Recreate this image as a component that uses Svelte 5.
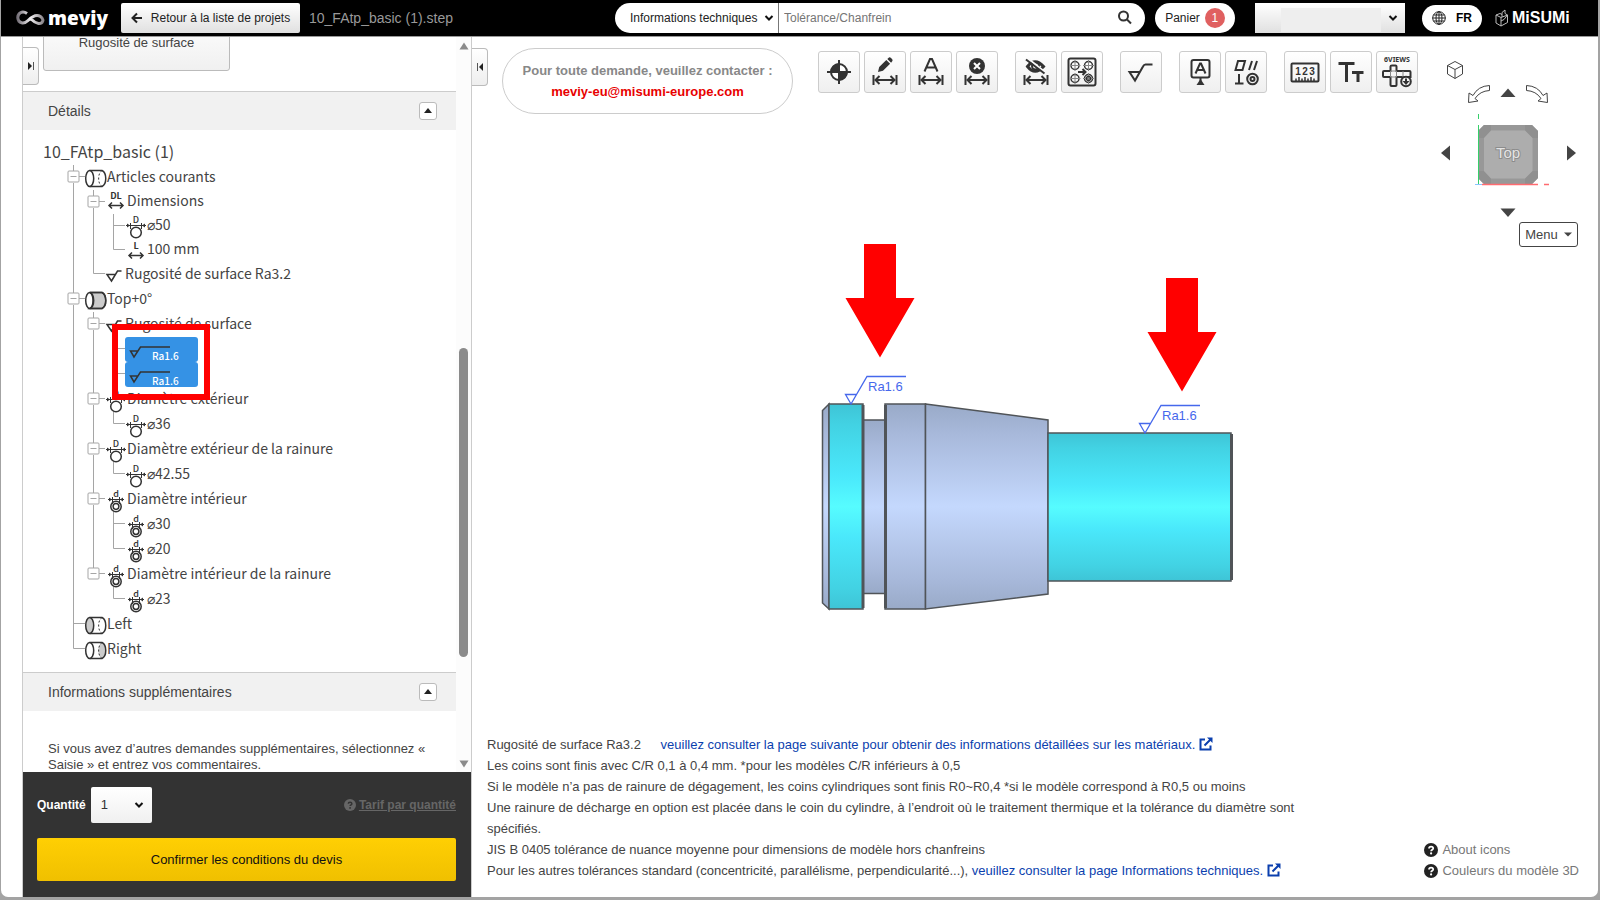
<script>
  const B = 'box', V = 'line', T = 'tee', E = 'end', L = 'last', N = 'none';
  const rows = [
    { g: [B], icon: 'cyl', label: 'Articles courants' },
    { g: [V, B], icon: 'dl', label: 'Dimensions', tight: true },
    { g: [V, V, T], icon: 'outer', label: '⌀50', tight: true },
    { g: [V, V, E], icon: 'len', label: '100 mm', tight: true },
    { g: [V, E], icon: 'rough', label: 'Rugosité de surface Ra3.2' },
    { g: [B], icon: 'cylFull', label: 'Top+0°' },
    { g: [V, B], icon: 'rough', label: 'Rugosité de surface' },
    { g: [V, V, T], icon: 'ra', label: 'Ra1.6' },
    { g: [V, V, E], icon: 'ra', label: 'Ra1.6' },
    { g: [V, B], icon: 'outer', label: 'Diamètre extérieur' },
    { g: [V, V, E], icon: 'outer', label: '⌀36' },
    { g: [V, B], icon: 'outer', label: 'Diamètre extérieur de la rainure' },
    { g: [V, V, E], icon: 'outer', label: '⌀42.55' },
    { g: [V, B], icon: 'inner', label: 'Diamètre intérieur' },
    { g: [V, V, T], icon: 'inner', label: '⌀30' },
    { g: [V, V, E], icon: 'inner', label: '⌀20' },
    { g: [V, L], icon: 'inner', label: 'Diamètre intérieur de la rainure' },
    { g: [V, N, E], icon: 'inner', label: '⌀23' },
    { g: [T], icon: 'cylLeft', label: 'Left' },
    { g: [E], icon: 'cylRight', label: 'Right' }
  ];
  const tools = [
    [['target', 'Origine'], ['edit', 'Modifier la cote'], ['auto', 'Cote automatique'], ['remove', 'Supprimer la cote']],
    [['hide', 'Masquer les cotes'], ['holes', 'Regrouper les trous']],
    [['rough', 'Rugosité']],
    [['datum', 'Référence'], ['geo', 'Tolérances géométriques']],
    [['ruler', 'Mesure'], ['text', 'Texte'], ['views', '6 vues']]
  ];
</script>

{#snippet chevron()}
  <svg class="chev" viewBox="0 0 10 8" width="10" height="8" aria-hidden="true"><path d="M1.5 2 5 5.5 8.5 2" /></svg>
{/snippet}

{#snippet help()}
  <svg viewBox="0 0 14 14" width="14" height="14" aria-hidden="true"><circle cx="7" cy="7" r="7" fill="currentColor" /><path d="M5 5.6C5 3 9.2 3.2 9.2 5.4 9.2 6.8 7.1 6.8 7.1 8.3" fill="none" stroke="var(--hole)" stroke-width="1.7" /><circle cx="7.1" cy="10.4" r="1.1" fill="var(--hole)" /></svg>
{/snippet}

{#snippet ext()}
  <svg class="ext" viewBox="0 0 14 14" width="14" height="14" aria-hidden="true"><path d="M6 2.5H1.5v10h10V8.5M5.5 8.5 12 2" fill="none" stroke="#0b3fae" stroke-width="2" /><path d="M8 .5h5.5V6Z" fill="#0b3fae" /></svg>
{/snippet}

{#snippet guide(kind)}
  <svg class="guide" viewBox="0 0 20 25" width="20" height="25" aria-hidden="true">
    {#if kind === 'line'}
      <path d="M10.5 0V25" />
    {:else if kind === 'tee'}
      <path d="M10.5 0V25M10.5 11.5H22" />
    {:else if kind === 'end'}
      <path d="M10.5 0V11.5H22" />
    {:else if kind !== 'none'}
      <path d="M10.5 0V6M16 11.5H22" />
      {#if kind === 'box'}<path d="M10.5 18V25" />{/if}
      <rect x="5" y="6" width="11" height="11" rx="1" />
      <path d="M7.5 11.5H13.5" />
    {/if}
  </svg>
{/snippet}

{#snippet nodeIcon(kind)}
  <svg class="node" class:slim={kind === 'rough'} viewBox="0 0 24 25" width="24" height="25" aria-hidden="true">
    {#if kind.startsWith('cyl')}
      {#if kind === 'cylFull'}<path class="grey" d="M7 5.5H19C24 8 24 19 19 21.5H7C11 19 11 8 7 5.5" />{/if}
      {#if kind === 'cylRight'}<path class="grey flat" d="M19 5.5C24 8 24 19 19 21.5C14 19 14 8 19 5.5" />{/if}
      <ellipse cx="6.7" cy="13.5" rx="4" ry="8" class:grey={kind === 'cylLeft'} />
      <path d="M6.7 5.5H19C24 8 24 19 19 21.5H6.7" />
      {#if kind !== 'cylFull'}<path class="dash" d="M19 5.5C14.5 8 14.5 19 19 21.5" />{/if}
    {:else if kind === 'dl'}
      <text x="13" y="10" class="tag">DL</text>
      <path d="M6 16.5H20M9 13.5 6 16.5 9 19.5M17 13.5 20 16.5 17 19.5" />
    {:else if kind === 'len'}
      <text x="13" y="12" class="tag">L</text>
      <path d="M6 18.5H20M9 15.5 6 18.5 9 21.5M17 15.5 20 18.5 17 21.5" />
    {:else if kind === 'outer'}
      <text x="13" y="9.5" class="tag thin">D</text>
      <path d="M3 12.5H23M7.5 10V16M18.5 10V16" class="hair" />
      <path d="M4 10.5 7 12.5 4 14.5ZM22 10.5 19 12.5 22 14.5Z" class="ink" />
      <circle cx="13" cy="19.5" r="5.3" />
    {:else if kind === 'inner'}
      <text x="13" y="9.5" class="tag thin">d</text>
      <path d="M5 12.500H21M9.500 10V17M16.500 10V17" class="hair" />
      <path d="M6 10.500 9 12.500 6 14.500ZM20 10.500 17 12.500 20 14.500Z" class="ink" />
      <circle cx="13" cy="19.500" r="5.200" /><circle cx="13" cy="19.500" r="2.900" />
    {:else}
      <path d="M18.500 9H14.500L8.500 19 4 12.500H12" />
    {/if}
  </svg>
{/snippet}

{#snippet span()}
  <path d="M9.500 24V34M32.500 24V34M11 29H31" /><path d="M15.500 25 11.500 29 15.500 33M26.500 25 30.500 29 26.500 33" />
{/snippet}

{#snippet toolIcon(kind)}
  <svg class="tool" viewBox="0 0 42 42" width="42" height="42" aria-hidden="true">
    {#if kind === 'target'}
      <circle cx="21" cy="21" r="8" fill="#fff" />
      <path d="M21 21H12.500A8.500 8.500 0 0 1 21 12.500ZM21 21H29.500A8.500 8.500 0 0 1 21 29.500Z" class="fill" />
      <path d="M9 21H33M21 9V33" />
    {:else if kind === 'edit'}
      <path class="fill" d="M14 21 15.200 16 22.300 8.900 26.100 12.700 19 19.800ZM23.300 7.900 25 6.500Q26 6 27 7L28 8Q29 9 28.400 10.100L27.100 11.700Z" />
      {@render span()}
    {:else if kind === 'auto'}
      <path d="M14.500 20.500 20 8H22L27.500 20.500M16.500 16.500H25.500" />
      {@render span()}
    {:else if kind === 'remove'}
      <circle class="fill" cx="21" cy="15" r="8" /><path d="M18 12 24 18M24 12 18 18" class="white" />
      {@render span()}
    {:else if kind === 'hide'}
      <path d="M12.500 15.500Q20 6 28.500 15.500 20 25 12.500 15.500Z" class="fat" /><circle cx="20.500" cy="15" r="3.500" />
      <path d="M13 7.500 30.500 21.500" stroke="#fafafa" /><path d="M11 8.500 29.500 22.500" />
      {@render span()}
    {:else if kind === 'holes'}
      <rect x="7.500" y="7.500" width="27" height="27" rx="2" />
      {#each [[14, 14.5], [27.5, 14.5], [14, 27.5], [27.5, 27.5]] as [x, y], i}
        <circle cx={x} cy={y} r="4" class="mid" /><path d="M{x - 5.5} {y}H{x + 5.5}M{x} {y - 5.5}V{y + 5.5}" class="faint" />
        {#if i === 3}<circle cx={x} cy={y} r="2" class="mid" />{/if}
      {/each}
      <path d="M17 21H24M21.500 18 24.500 21 21.500 24" />
    {:else if kind === 'rough'}
      <path d="M32.500 13.500H25.500Q24 13.500 23 15.500L15 29.500 9.500 21H19.500" />
    {:else if kind === 'datum'}
      <rect x="12.500" y="9" width="18" height="17.500" rx="2" /><path d="M16.500 22.500 21 12.500H22L26.500 22.500M18.500 19H24.500M21.500 27V31" />
      <path class="fill" d="M21.500 28 25.500 34H17.500Z" />
    {:else if kind === 'geo'}
      <path d="M10.500 19 13 10H20L17.500 19ZM24 19 27 10M29 19 32 10M10 32.500H18.500M14 23V32.500" />
      <circle cx="27.500" cy="28" r="5.300" /><circle cx="27.500" cy="28" r="2" />
    {:else if kind === 'ruler'}
      <rect x="7.500" y="12.500" width="27" height="18" rx="1" />
      <text x="14" y="24" class="num">1</text><text x="21" y="24" class="num">2</text><text x="28" y="24" class="num">3</text>
      <path d="M12 30V27.500M15 30V26M18 30V27.500M21 30V26M24 30V27.500M27 30V26M30 30V27.500" class="mid" />
    {:else if kind === 'text'}
      <path d="M8.500 12.500H24.500M16.500 12.500V31M22 21.500H33.500M28 21.500V31" class="bold" />
    {:else}
      <text x="21" y="11" class="cap">6VIEWS</text>
      <path d="M16 14.500H19.500Q20.500 14.500 20.500 15.500V20H33.500Q34.500 20 34.500 21V26H20.500V34Q20.500 35 19.500 35H15.500Q14.500 35 14.500 34V26H8Q7 26 7 25V21Q7 20 8 20H14.500V15.500Q14.500 14.500 16 14.500Z" /><path d="M14.500 20H20.500V26H14.500ZM27 20V26" class="faint" />
      <circle cx="30" cy="30.500" r="4.800" fill="#f4f4f4" /><path class="fill" d="M29 27.500H31V30H33.500L30 34 26.500 30H29Z" />
    {/if}
  </svg>
{/snippet}

{#snippet face(d, fill)}<path {d} {fill} />{/snippet}

<div class="window">
  <header>
    <a class="meviy" href="#accueil" aria-label="meviy">
      <svg viewBox="0 0 29 16" width="29" height="16" aria-hidden="true">
        <defs><linearGradient id="lg"><stop offset="0" stop-color="#77727a" /><stop offset=".5" stop-color="#f2f0f2" /><stop offset="1" stop-color="#8d888d" /></linearGradient></defs>
        <path d="M11 3.500C6 0 1.500 3.500 1.800 8 2.200 13.500 8 14.500 12 10.500 16 6.500 20 3.500 24.500 6.500 29 9.500 26.500 14 22.500 13.500 19.500 13 17 11 15 9" fill="none" stroke="url(#lg)" stroke-width="3" />
      </svg>
      <span>meviy</span>
    </a>
    <button class="back">
      <svg viewBox="0 0 12 12" width="12" height="12" aria-hidden="true"><path d="M11 6H2M6 1.500 1.500 6 6 10.500" fill="none" stroke="#222" stroke-width="2" /></svg>
      Retour à la liste de projets
    </button>
    <span class="file">10_FAtp_basic (1).step</span>
    <div class="right">
      <form class="search" onsubmit={(e) => e.preventDefault()}>
        <span class="select"><select aria-label="Catégorie"><option>Informations techniques</option></select>{@render chevron()}</span>
        <input type="text" aria-label="Recherche" placeholder="Tolérance/Chanfrein" />
        <button aria-label="Rechercher"><svg viewBox="0 0 16 16" width="16" height="16" aria-hidden="true"><circle cx="6.500" cy="6" r="4.500" /><path d="M10 9.500 14 13.500" /></svg></button>
      </form>
      <button class="cart">Panier <span>1</span></button>
      <span class="select account"><select aria-label="Compte"><option></option></select>{@render chevron()}</span>
      <button class="lang">
        <svg viewBox="0 0 14 14" width="14" height="14" aria-hidden="true"><circle cx="7" cy="7" r="6.300" /><ellipse cx="7" cy="7" rx="3" ry="6.300" /><path d="M7 .500V13.500M.500 7H13.500M1.500 4H12.500M1.500 10H12.500" /></svg>
        FR
      </button>
      <a class="misumi" href="#misumi" aria-label="MiSUMi">
        <svg viewBox="0 0 14 18" width="14" height="18" aria-hidden="true"><path d="M1 6 6 8.500V17L1 14ZM6 8.500 12.500 6V13.500L6 17M1 6 5 4.500 7 5.500M7 3.500 10 1 10 4.500M7 3.500V8M10 4.500 12.500 6M6 12 9 10.500 12.500 6" /></svg>
        <span>MiSUMi</span>
      </a>
    </div>
  </header>

  <div class="body">
    <aside>
      <div class="scroll">
        <div class="content">
          <button class="tab" aria-label="Déployer"><svg viewBox="0 0 8 10" width="8" height="10"><path d="M1 1 5 5 1 9Z" fill="#222" /><path d="M6.500 1V9" stroke="#555" /></svg></button>
          <button class="surface">Rugosité de surface</button>
          <section>
            <h2>Détails <button aria-label="Réduire les détails"><svg viewBox="0 0 8 5" width="8" height="5"><path d="M0 5 4 0 8 5Z" fill="#222" /></svg></button></h2>
            <div class="tree">
              <div class="root">10_FAtp_basic (1)</div>
              <ul>
                {#each rows as row}
                  <li class:tight={row.tight}>
                    {#each row.g as kind}{@render guide(kind)}{/each}
                    {#if row.icon === 'ra'}
                      <span class="ra">
                        <svg viewBox="0 0 73 25" width="73" height="25" aria-hidden="true"><path d="M45 10H15.500L9 20 5.500 14H12.500" /></svg>
                        <b>{row.label}</b>
                      </span>
                    {:else}
                      {@render nodeIcon(row.icon)}<span>{row.label}</span>
                    {/if}
                  </li>
                {/each}
              </ul>
              <div class="mark"></div>
            </div>
          </section>
          <section>
            <h2>Informations supplémentaires <button aria-label="Réduire les informations"><svg viewBox="0 0 8 5" width="8" height="5"><path d="M0 5 4 0 8 5Z" fill="#222" /></svg></button></h2>
            <p>Si vous avez d’autres demandes supplémentaires, sélectionnez « Saisie » et entrez vos commentaires.</p>
          </section>
        </div>
        <div class="bar" aria-hidden="true">
          <svg viewBox="0 0 10 8" width="10" height="8"><path d="M.500 7.500 5 .500 9.500 7.500Z" /></svg>
          <i></i>
          <svg viewBox="0 0 10 8" width="10" height="8"><path d="M.500 .500H9.500L5 7.500Z" /></svg>
        </div>
      </div>
      <footer>
        <div class="qty">
          <label for="qty">Quantité</label>
          <span class="select"><select id="qty"><option>1</option></select>{@render chevron()}</span>
          <a href="#tarif">{@render help()}<span>Tarif par quantité</span></a>
        </div>
        <button class="confirm">Confirmer les conditions du devis</button>
      </footer>
    </aside>

    <main>
      <div class="top">
        <button class="tab" aria-label="Replier"><svg viewBox="0 0 8 10" width="8" height="10"><path d="M7 1 3 5 7 9Z" fill="#222" /><path d="M1.500 1V9" stroke="#555" /></svg></button>
        <div class="contact">Pour toute demande, veuillez contacter :<a href="mailto:meviy-eu@misumi-europe.com">meviy-eu@misumi-europe.com</a></div>
        <div class="toolbar">
          {#each tools as group}
            <div>{#each group as [kind, label]}<button aria-label={label}>{@render toolIcon(kind)}</button>{/each}</div>
          {/each}
        </div>
      </div>

      <nav aria-label="Orientation">
        <button class="home" aria-label="Vue isométrique"><svg viewBox="0 0 18 20" width="18" height="20"><path d="M9 1.500 16.500 5.500V14L9 18.500 1.500 14V5.500ZM1.500 5.500 9 9.500 16.500 5.500M9 9.500V18.500" /></svg></button>
        <div class="turn">
          <button aria-label="Pivoter à gauche"><svg viewBox="0 0 22 20" width="22" height="20"><path d="M21.500 1.500Q10 2 5 11.500L1 9 .500 18.500 10 17 7 14.500Q12 7 21.500 6.500Z" /></svg></button>
          <button aria-label="Haut"><svg viewBox="0 0 16 20" width="16" height="20"><path d="M.500 13 8 4.500 15.500 13Z" class="solid" /></svg></button>
          <button aria-label="Pivoter à droite"><svg viewBox="0 0 22 20" width="22" height="20"><path d="M.500 1.500Q12 2 17 11.500L21 9 21.500 18.500 12 17 15 14.500Q10 7 .500 6.500Z" /></svg></button>
        </div>
        <div class="cube">
          <button aria-label="Gauche"><svg viewBox="0 0 10 16" width="10" height="16"><path d="M0 8 9 .500V15.500Z" class="solid" /></svg></button>
          <svg viewBox="1467 112 84 76" width="84" height="76">
            <path d="M1484 125H1532L1538 131V178L1532 184H1484L1478 178V131Z" fill="#989898" stroke="none" />
            <path d="M1484 125 1478 131V138H1484L1491 131V125ZM1532 125 1538 131V138H1532L1525 131V125ZM1484 184 1478 178V171H1484L1491 178V184ZM1532 184 1538 178V171H1532L1525 178V184Z" fill="#909090" stroke="none" />
            <path d="M1491 130.500H1525L1532.500 138V171L1525 178.500H1491L1484 171V138Z" fill="#adadad" stroke="none" />
            <text x="1508" y="158">Top</text>
            <path d="M1478.500 114V119M1478.500 125V184" stroke="#35d06a" /><path d="M1482 184.500H1538M1544 184.500H1549" stroke="#ff6b70" stroke-width="1.500" /><path d="M1475 184.500H1482" stroke="#8cc4ff" />
          </svg>
          <button aria-label="Droite"><svg viewBox="0 0 10 16" width="10" height="16"><path d="M10 8 1 .500V15.500Z" class="solid" /></svg></button>
        </div>
        <button class="down" aria-label="Bas"><svg viewBox="0 0 16 10" width="16" height="10"><path d="M.500 .500H15.500L8 9Z" class="solid" /></svg></button>
        <button class="menu">Menu <svg viewBox="0 0 8 5" width="8" height="5"><path d="M0 .500H8L4 4.500Z" class="solid" /></svg></button>
      </nav>

      <div class="stage">
        <svg viewBox="817 240 436 380" width="436" height="380" role="img" aria-label="Modèle">
          <defs>
            <linearGradient id="cy" x2="0" y2="1"><stop offset="0" stop-color="#3ec4d6" /><stop offset=".1" stop-color="#42d2e3" /><stop offset=".35" stop-color="#4ae8fb" /><stop offset=".5" stop-color="#56fcff" /><stop offset=".65" stop-color="#4ae8fb" /><stop offset=".9" stop-color="#42d2e3" /><stop offset="1" stop-color="#3ec4d6" /></linearGradient>
            <linearGradient id="gr" x2="0" y2="1"><stop offset="0" stop-color="#99aac8" /><stop offset=".15" stop-color="#a8b9db" /><stop offset=".5" stop-color="#c4d8fd" /><stop offset=".85" stop-color="#a8b9db" /><stop offset="1" stop-color="#99aac8" /></linearGradient>
          </defs>
          <g stroke="#505458" stroke-width="1.500">
            {@render face('M829 404 822.500 410.500V603L829 609Z', 'url(#gr)')}
            {@render face('M863 420H885V593.500H863Z', 'url(#gr)')}
            {@render face('M829 404H863V609H829Z', 'url(#cy)')}
            {@render face('M885 404H925.500V609H885Z', 'url(#gr)')}
            {@render face('M925.500 404 1048 420V594L925.500 609Z', 'url(#gr)')}
            {@render face('M1048 433H1231V581H1048Z', 'url(#cy)')}
            <path d="M863 405V608M885.500 405V608M1231.500 434V580" stroke-width="3" />
          </g>
          <g fill="#f00">
            <path d="M864 244H896V298H914.500L880 357.500 845.500 298H864Z" />
            <path d="M1166 278H1198V332H1216.500L1182 391.500 1147.500 332H1166Z" />
          </g>
          <g class="callout">
            <path d="M906 376.500H867L851 404 845.500 394.500H856.500" /><text x="868" y="391">Ra1.6</text>
            <path d="M1200 405.500H1161L1145 433 1139.500 423.500H1150.500" /><text x="1162" y="420">Ra1.6</text>
          </g>
        </svg>
      </div>

      <div class="bottom">
        <div class="notes">
          <div>Rugosité de surface Ra3.2 <a class="first" href="#materiaux">veuillez consulter la page suivante pour obtenir des informations détaillées sur les matériaux. {@render ext()}</a></div>
          <div>Les coins sont finis avec C/R 0,1 à 0,4 mm. *pour les modèles C/R inférieurs à 0,5</div>
          <div>Si le modèle n’a pas de rainure de dégagement, les coins cylindriques sont finis R0~R0,4 *si le modèle correspond à R0,5 ou moins</div>
          <div>Une rainure de décharge en option est placée dans le coin du cylindre, à l’endroit où le traitement thermique et la tolérance du diamètre sont spécifiés.</div>
          <div>JIS B 0405 tolérance de nuance moyenne pour dimensions de modèle hors chanfreins</div>
          <div>Pour les autres tolérances standard (concentricité, parallélisme, perpendicularité...), <a href="#techniques">veuillez consulter la page Informations techniques. {@render ext()}</a></div>
        </div>
        <div class="links">
          <a href="#icons">{@render help()}About icons</a>
          <a href="#couleurs">{@render help()}Couleurs du modèle 3D</a>
        </div>
      </div>
    </main>
  </div>
</div>

<style>
  :global(body) { background: #a3a3a3; }
  * { box-sizing: border-box; }
  .window { font: 13px/16px "Liberation Sans", Arial, sans-serif; color: #444; background: #fff; height: calc(100vh - 3px); margin: 0 2px 0 1px; border-radius: 0 0 7px 7px; overflow: hidden; display: flex; flex-direction: column; }
  button, select, input { font: inherit; color: inherit; margin: 0; padding: 0; border: 0; background: none; }
  svg { flex: none; display: block; }
  a { color: inherit; text-decoration: none; }
  ul { list-style: none; margin: 0; padding: 0; }

  header { height: 37px; flex: none; background: #000; border-bottom: 1px solid #999; display: flex; align-items: center; padding: 0 27px 0 15px; font-size: 12px; color: #222; }
  .meviy { display: flex; align-items: center; gap: 3px; width: 105px; color: #fff; font: 800 19px/30px "Open Sans", sans-serif; }
  .meviy span { padding-bottom: 1px; }
  .back { height: 30px; width: 179px; display: flex; align-items: center; justify-content: center; gap: 8px; border-radius: 2px; background: linear-gradient(#fff, #e0e0e0); white-space: nowrap; }
  .file { margin-left: 9px; font-size: 14px; color: #999; white-space: nowrap; }
  .right { margin-left: auto; display: flex; align-items: center; }
  .select { position: relative; display: flex; align-items: center; }
  .select select { appearance: none; width: 100%; height: 100%; outline: 0; }
  .chev { position: absolute; right: 4px; pointer-events: none; }
  .chev path { fill: none; stroke: #111; stroke-width: 2; }
  .search { display: flex; width: 530px; height: 30px; background: #fff; border-radius: 15px; overflow: hidden; }
  .search .select { width: 164px; border-right: 1px solid #777; }
  .search select { padding-left: 15px; }
  .search input { flex: 1; min-width: 0; padding: 0 5px; outline: 0; }
  .search input::placeholder { color: #757575; opacity: 1; }
  .search button { width: 40px; padding: 0 12px; }
  .search button svg { fill: none; stroke: #333; stroke-width: 2; }
  .cart { margin-left: 10px; width: 80px; height: 30px; border-radius: 15px; background: #fff; display: flex; align-items: center; justify-content: center; gap: 5px; }
  .cart span { width: 20px; height: 20px; border-radius: 10px; line-height: 20px; background: #e06060; color: #fff; }
  .account { margin-left: 20px; width: 150px; height: 30px; background: linear-gradient(#fff, #e0e0e0); }
  .account::before { content: ""; position: absolute; inset: 5px 24px 1px 26px; background: #eee; }
  .account .chev { right: 7px; }
  .lang { margin-left: 17px; width: 60px; height: 27px; border-radius: 14px; background: #fff; display: flex; align-items: center; justify-content: center; gap: 10px; font-weight: bold; color: #000; }
  .lang svg { fill: none; stroke: #222; stroke-width: 1; }
  .misumi { margin-left: 13px; width: 76px; display: flex; align-items: center; gap: 3px; color: #fff; font: bold 16px/30px "Liberation Sans", sans-serif; white-space: nowrap; }
  .misumi svg { fill: none; stroke: #bbb; stroke-width: 1; }

  .body { flex: 1; min-height: 0; display: flex; padding-left: 21px; }
  aside { width: 450px; flex: none; border-left: 1px solid #ccc; border-right: 1px solid #ccc; display: flex; flex-direction: column; }
  .scroll { flex: 1; min-height: 0; display: flex; }
  .content { flex: 1; min-width: 0; overflow: hidden; position: relative; }
  .tab { border: 1px solid #bbb; border-left: 0; border-radius: 0 4px 4px 0; background: linear-gradient(#fff, #eee); width: 16px; height: 38px; display: flex; align-items: center; justify-content: center; flex: none; }
  .content .tab { position: absolute; left: 0; top: 10px; }
  .surface { display: block; width: 187px; height: 57px; margin: -23px 0 20px 20px; border: 1px solid #bbb; border-radius: 3px; background: linear-gradient(#fff, #f0f0f0); }
  h2 { margin: 0; height: 39px; padding: 0 19px 1px 25px; border-top: 1px solid #ccc; background: #f1f1f1; font: 14px/16px "Liberation Sans", sans-serif; display: flex; align-items: center; justify-content: space-between; }
  h2 button { width: 18px; height: 18px; border: 1px solid #bbb; border-radius: 3px; background: #fff; display: grid; place-items: center; }
  .tree { position: relative; padding: 9px 0 10px; font-family: "Noto Sans CJK JP", "Noto Sans", sans-serif; font-size: 14px; color: #444; }
  .root { height: 26px; line-height: 24px; padding-left: 20px; font-size: 16px; }
  li { display: flex; height: 25px; line-height: 23px; padding-left: 40px; white-space: nowrap; }
  li.tight { height: 24px; line-height: 21px; }
  li.tight .node { margin-top: -1px; }
  .guide, .node { overflow: visible; fill: none; }
  .guide { stroke: #a5a5a5; }
  .node { stroke: #333; stroke-width: 1.5; }
  .slim { margin-right: -2px; }
  .node .grey { fill: #ccc; }
  .node .flat { stroke: none; }
  .node .dash { stroke-width: 1; stroke-dasharray: 2 2; }
  .node .ink { fill: #333; stroke: none; }
  .tag { font: bold 9px "Noto Sans CJK JP", sans-serif; text-anchor: middle; fill: #333; stroke: none; }
  .thin { font-weight: 500; }
  .ra { position: relative; display: flex; margin-left: 2px; background: #3592e5; border-radius: 3px; width: 73px; color: #fff; }
  .ra svg { fill: none; stroke: #333; stroke-width: 1.5; }
  .ra b { position: absolute; left: 27px; top: 12px; font-size: 10px; line-height: 14px; font-weight: 500; }
  .mark { position: absolute; left: 89px; top: 194px; width: 98px; height: 76px; border: 6px solid #f00; }
  p { margin: 0; padding: 30px 0 0 25px; max-width: 410px; }
  .bar { width: 15px; background: #fcfcfc; display: flex; flex-direction: column; align-items: center; padding: 5px 0 4px; fill: #8b8b8b; }
  .bar i { width: 9px; flex: 0 0 309px; margin: 298px 0 auto; border-radius: 5px; background: #8b8b8b; }

  footer { background: #333; padding: 15px 15px 16px 14px; display: flex; flex-direction: column; gap: 15px; }
  .qty { display: flex; align-items: center; font-weight: bold; font-size: 12px; color: #fff; }
  .qty .select { margin-left: 5px; width: 61px; height: 36px; border-radius: 2px; background: linear-gradient(#fff, #f0f0f0); color: #333; font-weight: normal; }
  .qty select { padding-left: 10px; font-size: 13px; }
  .qty .chev { right: 8px; }
  .qty a { --hole: #333; margin-left: auto; display: flex; align-items: center; gap: 3px; color: #666; }
  .qty a span { text-decoration: underline; }
  .qty a svg { width: 12px; height: 12px; }
  .confirm { height: 43px; border-radius: 2px; background: linear-gradient(#ffcf03, #f0c000); color: #111; }

  main { flex: 1; min-width: 0; position: relative; display: flex; flex-direction: column; }
  .top { display: flex; align-items: flex-start; padding-top: 11px; }
  .contact { width: 291px; height: 66px; margin-left: 14px; border: 1px solid #ccc; border-radius: 33px; text-align: center; font-weight: bold; line-height: 21px; padding-top: 11px; color: #888; white-space: nowrap; }
  .contact a { display: block; color: #e80000; }
  .toolbar { display: flex; gap: 17px; margin: 3px 0 0 25px; }
  .toolbar div { display: flex; gap: 4px; }
  .toolbar button { width: 42px; height: 42px; border: 1px solid #ccc; border-radius: 3px; background: linear-gradient(#fff, #efefef); display: grid; place-items: center; }
  .tool { fill: none; stroke: #333; stroke-width: 2; margin: -1px; }
  .tool .fill { fill: #333; stroke: none; }
  .tool .white { stroke: #fff; }
  .tool .fat { stroke-width: 3; }
  .tool .mid { stroke-width: 1.5; }
  .node .hair { stroke-width: 1; }
  .tool .faint { stroke-width: 1; stroke: #888; }
  .tool .bold { stroke-width: 3; }
  .num { font: bold 10px "Liberation Sans", sans-serif; text-anchor: middle; fill: #333; stroke: none; }
  .cap { font: bold 7px "Noto Sans", sans-serif; text-anchor: middle; fill: #333; stroke: none; }

  nav { position: absolute; top: 23px; right: 20px; width: 137px; display: flex; flex-direction: column; }
  nav svg { fill: #fff; stroke: #444; stroke-width: 1; }
  nav .solid { fill: #444; stroke: none; }
  .home { align-self: flex-start; margin-left: 5px; }
  .turn { display: flex; justify-content: center; gap: 10px; margin-top: 4px; padding-right: 4px; }
  .cube { display: flex; align-items: center; justify-content: space-between; margin-top: 8px; padding-right: 2px; }
  .cube button { padding-top: 6px; }
  .cube text { font: 15px "Liberation Sans", sans-serif; text-anchor: middle; fill: #e4e4e4; stroke: #8c8c8c; stroke-width: 2px; paint-order: stroke; }
  .down { align-self: center; margin-top: 20px; padding-right: 4px; }
  .menu { align-self: flex-end; margin-top: 4px; width: 59px; height: 25px; border: 1px solid #444; border-radius: 3px; background: #fff; display: flex; align-items: center; justify-content: center; gap: 6px; }

  .stage { flex: 1; min-height: 0; display: flex; align-items: center; justify-content: center; padding-top: 12px; }
  .callout { fill: none; stroke: #4668ec; stroke-width: 1.3; }
  .callout text { font: 13px "Liberation Sans", sans-serif; fill: #4668ec; stroke: none; }
  .bottom { display: flex; align-items: flex-end; justify-content: space-between; padding: 0 19px 16px 15px; line-height: 21px; }
  .notes { width: 820px; }
  .notes a { color: #0b3fae; }
  .notes .first { margin-left: 16px; }
  .ext { display: inline-block; vertical-align: -2px; }
  .links { --hole: #fff; }
  .links a { display: flex; align-items: center; gap: 4px; color: #777; }
  .links svg { color: #222; }
</style>
